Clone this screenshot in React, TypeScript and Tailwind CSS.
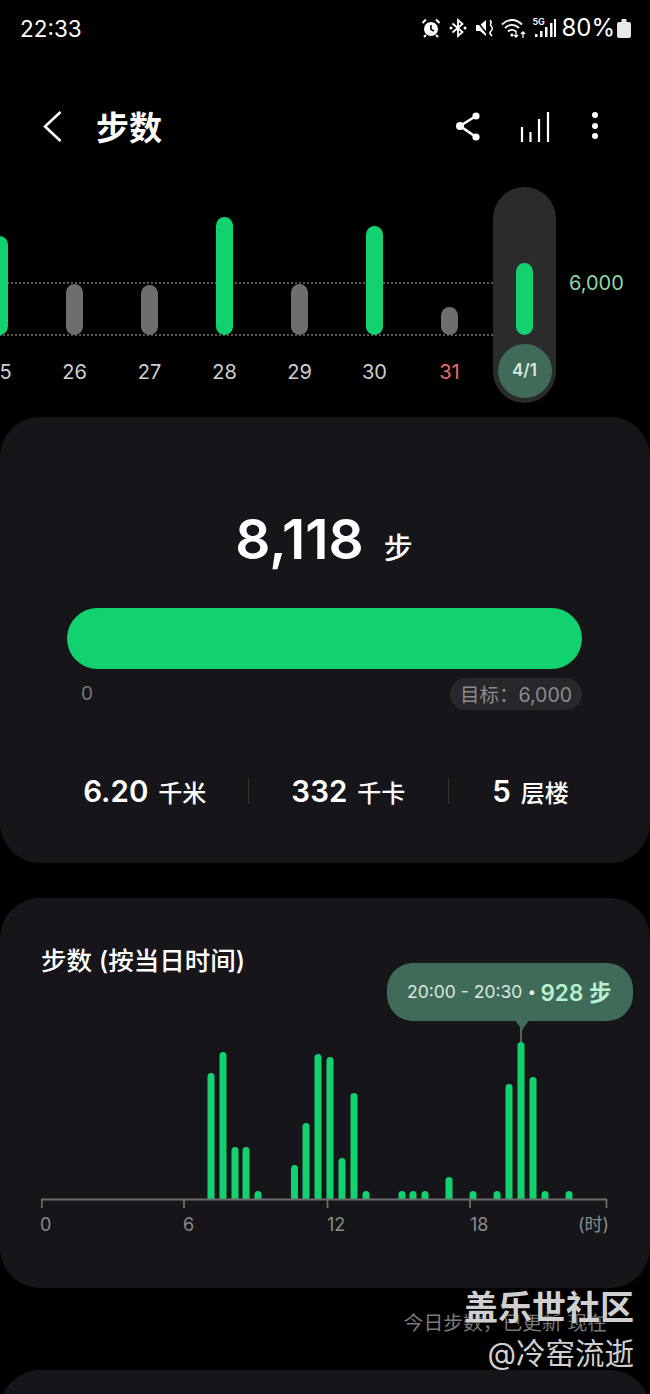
import React from 'react';

const font = { fontFamily: 'Inter, "Noto Sans CJK SC", sans-serif' };

// daily totals shown on the week strip; height is the bar height in px
const days = [
  { label: '25', height: 99, done: true },
  { label: '26', height: 51, done: false },
  { label: '27', height: 50, done: false },
  { label: '28', height: 118, done: true },
  { label: '29', height: 51, done: false },
  { label: '30', height: 109, done: true },
  { label: '31', height: 28, done: false, holiday: true },
];

// half-hour buckets: x centre and top of each bar in chart coordinates
const hourly: [number, number][] = [
  [170, 175], [182, 154], [194, 249], [205, 249], [217, 293],
  [253.5, 267], [265, 225], [277, 156], [289, 159], [301, 260], [313, 195], [325, 293],
  [361, 293], [372, 293], [384, 293], [408, 279], [432, 293], [456, 293],
  [468, 186], [480, 144], [492, 179], [504, 293], [528, 293],
];

const StatusIcons = () => (
  <div className="flex items-center text-white">
    {/* alarm */}
    <svg width="20" height="20" viewBox="0 0 20 20" className="mr-[8px]">
      <circle cx="10" cy="11" r="7" fill="#fff" />
      <path d="M10 7v4.5l3 1.5" stroke="#000" strokeWidth="1.6" fill="none" />
      <path d="M1.5 5 5 1.5M18.5 5 15 1.5M5 17l-2 2M15 17l2 2" stroke="#fff" strokeWidth="2" />
    </svg>
    {/* bluetooth with side dots */}
    <svg width="18" height="20" viewBox="0 0 18 20" className="mr-[8px]">
      <path d="M3.5 5.5 13.5 14 9 18V2l4.5 4L3.5 14.5" stroke="#fff" strokeWidth="1.8" fill="none" />
      <circle cx="2" cy="10" r="1.5" fill="#fff" />
      <circle cx="16" cy="10" r="1.5" fill="#fff" />
    </svg>
    {/* muted speaker */}
    <svg width="20" height="20" viewBox="0 0 20 20" className="mr-[6px]">
      <path d="M1 7h4l6-5v16l-6-5H1z" fill="#fff" />
      <path d="M1 2l12 15" stroke="#000" strokeWidth="1.5" />
      <path d="M15 2c3 3-1 4 1 6s2 3 0 5-1 3 1 5" stroke="#fff" strokeWidth="1.6" fill="none" />
    </svg>
    {/* wifi with up/down arrows */}
    <svg width="27" height="22" viewBox="0 0 27 22" className="mr-[4px]">
      <path d="M1 7.5c6-6 14-6 20 0M4 11c4.500-4 9.500-4 14 0M7 14.500c2.500-2 5.500-2 8 0" stroke="#fff" strokeWidth="1.8" fill="none" />
      <path d="M15 14v6m-2-2 2 2 2-2M22 21v-6m-2 2 2-2 2 2" stroke="#fff" strokeWidth="1.3" fill="none" />
      <circle cx="11" cy="18" r="1.600" fill="#fff" />
    </svg>
    {/* 5G and signal bars */}
    <div className="relative w-[24px] h-[22px] mr-[5px]">
      <span className="absolute left-0 top-[-1px] text-[9px] leading-[11px] font-semibold">5G</span>
      <svg width="24" height="22" viewBox="0 0 24 22" className="absolute inset-0">
        <path d="M3 17h2.500v3H3zM8 14h2.500v6H8zM13 10h2.500v10H13zM18 6h2.500v14H18zM22 2h2v18h-2z" fill="#fff" />
      </svg>
    </div>
    <span className="text-[24px] leading-none mr-[2px]">80%</span>
    {/* battery */}
    <svg width="14" height="19" viewBox="0 0 14 19">
      <path d="M4.500 0h5v3h-5z" fill="#e8e8e8" />
      <rect x="0" y="3" width="14" height="16" rx="2" fill="#e8e8e8" />
    </svg>
  </div>
);

const StatItem = ({ value, unit }: { value: string; unit: string }) => (
  <div className="flex items-baseline">
    <span className="text-[29.5px] font-semibold text-white">{value}</span>
    <span className="ml-[10px] text-[24px] font-medium text-white">{unit}</span>
  </div>
);

const App = () => {
  return (
    <div className="w-[650px] h-[1394px] overflow-hidden bg-black relative" style={font}>
      {/* status bar */}
      <div className="h-[56px] flex items-center justify-between pl-[20px] pr-[19px]">
        <span className="text-[22.5px] pt-[2px] text-white">22:33</span>
        <StatusIcons />
      </div>

      {/* header */}
      <div className="h-[131px] pt-[41px] pb-[30px] flex items-center pl-[43px] pr-[51px]">
        <svg width="19" height="32" viewBox="0 0 19 32" className="shrink-0">
          <path d="M17.500 1 2 15.500 17.500 30" stroke="#fff" strokeWidth="2.600" fill="none" />
        </svg>
        <h1 className="ml-[34px] pt-[3px] text-[33px] font-bold text-white flex-1">步数</h1>
        <svg width="28" height="30" viewBox="0 0 28 30" className="mr-[38px] -mt-[2px]">
          <path d="M22 5 6 15l16 11" stroke="#fff" strokeWidth="2.600" fill="none" />
          <circle cx="22" cy="5" r="3.600" fill="#fff" />
          <circle cx="6" cy="15" r="4" fill="#fff" />
          <circle cx="22" cy="26" r="3.600" fill="#fff" />
        </svg>
        <svg width="30" height="32" viewBox="0 0 30 32" className="mr-[41px]">
          <path d="M2 16v15M10.500 21v10M19 8v23M28 1v30" stroke="#fff" strokeWidth="2.200" />
        </svg>
        <svg width="8" height="30" viewBox="0 0 8 30" className="-mt-[2px]">
          <circle cx="4" cy="4" r="3" fill="#fff" />
          <circle cx="4" cy="15" r="3" fill="#fff" />
          <circle cx="4" cy="25" r="3" fill="#fff" />
        </svg>
      </div>

      {/* week strip */}
      <div className="relative h-[216px]">
        <div className="absolute left-0 top-[95px] w-[493px] border-t-2 border-dotted border-[#555]" />
        <div className="absolute left-0 top-[147px] w-[493px] border-t-2 border-dotted border-[#555]" />
        <div className="flex -ml-[38px]">
          {days.map((d) => (
            <div key={d.label} className="relative w-[75px] flex flex-col items-center">
              <div className="h-[148px] flex items-end">
                <div
                  className={`w-[17px] rounded-full ${d.done ? 'bg-[#12d26f]' : 'bg-[#6e6e6e]'}`}
                  style={{ height: d.height }}
                />
              </div>
              <span className={`mt-[25px] text-[20px] leading-[24px] ${d.holiday ? 'text-[#e86a6a]' : 'text-[#cfcfcf]'}`}>
                {d.label}
              </span>
            </div>
          ))}
          {/* today, highlighted */}
          <div className="relative w-[63px] h-[216px] ml-[6px] rounded-full bg-[#2a2b2d] flex flex-col items-center">
            <div className="h-[148px] flex items-end">
              <div className="w-[17px] h-[72px] rounded-full bg-[#12d26f]" />
            </div>
            <div className="mt-[9px] w-[54px] h-[54px] rounded-full bg-[#3f6b58] flex items-center justify-center text-[17px] font-semibold text-[#d8e8df]">
              4/1
            </div>
          </div>
        </div>
        <span className="absolute left-[569px] top-[84px] text-[20px] leading-[24px] text-[#8fd6a4]">6,000</span>
      </div>

      {/* today's summary */}
      <div className="mt-[14px] h-[446px] rounded-[40px] bg-[#16161a] pl-[67px] pr-[68px] pt-[84px]">
        <div className="h-[76px] flex items-baseline justify-center pr-[1px]">
          <span className="text-[55px] leading-[76px] font-semibold text-white">8,118</span>
          <span className="ml-[20px] text-[29px] font-medium text-white">步</span>
        </div>
        <div className="mt-[31px] h-[61px] rounded-full bg-[#12d26f]" />
        <div className="mt-[9px] flex items-start justify-between">
          <span className="ml-[14px] pt-[2px] text-[19px] leading-[28px] text-[#777]">0</span>
          <span className="h-[32px] px-[10px] rounded-full bg-[#27282b] text-[19.5px] leading-[34px] text-[#8c8c8c]">
            目标：6,000
          </span>
        </div>
        <div className="mt-[59px] -mx-[50px] flex items-center justify-center pl-[3px]">
          <StatItem value="6.20" unit="千米" />
          <div className="mx-[42px] w-px h-[26px] bg-[#333]" />
          <StatItem value="332" unit="千卡" />
          <div className="mx-[43px] w-px h-[26px] bg-[#333]" />
          <StatItem value="5" unit="层楼" />
        </div>
      </div>

      {/* steps by time of day */}
      <div className="relative mt-[35px] h-[390px] rounded-[40px] bg-[#16161a] pl-[41px] pt-[45px]">
        <h2 className="text-[25.5px] leading-[36px] font-medium text-white">步数 (按当日时间)</h2>

        <div className="absolute left-[387px] top-[65px] w-[246px] h-[58px] pl-[20px] pt-[1px] rounded-[26px] bg-[#3f6b58] flex items-center">
          <span className="text-[17.5px] text-[#d8e8df]">20:00 - 20:30</span>
          <span className="ml-[6px] mr-[5px] text-[15px] font-bold text-[#e6f0ea]">•</span>
          <span className="text-[22.5px] font-semibold text-[#b8f0d0]">928 步</span>
        </div>

        <svg width="580" height="320" viewBox="0 0 580 320" className="absolute left-[41px] top-0">
          {hourly.map(([x, top]) => (
            <path key={x} d={`M${x - 3.5} 301.500V${top + 3.500}a3.500 3.500 0 0 1 7 0V301.500z`} fill="#12d26f" />
          ))}
          <path d="M474.500 123h13l-6.500 9z" fill="#3f6b58" />
          <path d="M480 130v14" stroke="#5d8573" strokeWidth="1.500" />
          <path d="M0 301.500h566M.75 301v9M143 301v9M286.500 301v9M429 301v9M565.500 301v9" stroke="#6c6c6c" strokeWidth="1.800" fill="none" />
        </svg>

        <span className="absolute left-[40px] top-[317px] text-[18px] leading-[20px] text-[#8a8a8a]">0</span>
        <span className="absolute left-[183px] top-[317px] text-[18px] leading-[20px] text-[#8a8a8a]">6</span>
        <span className="absolute left-[327px] top-[317px] text-[18px] leading-[20px] text-[#8a8a8a]">12</span>
        <span className="absolute left-[470px] top-[317px] text-[18px] leading-[20px] text-[#8a8a8a]">18</span>
        <span className="absolute left-[578px] top-[317px] text-[18px] leading-[20px] text-[#8a8a8a]">(时)</span>
      </div>

      <div className="mt-[23px] pr-[43px] text-right text-[19.8px] leading-[24px] text-[#7a7a7a]">今日步数，已更新 现在</div>

      {/* next card, cut off by the screen edge */}
      <div className="mt-[35px] h-[80px] rounded-t-[40px] bg-[#16161a]" />

      {/* community watermark */}
      <div className="absolute right-[16px] top-[1286px] text-right text-[#cfcfcf]">
        <div className="text-[34px] leading-[44px] font-bold [text-shadow:0_0_2px_#000]">盖乐世社区</div>
        <div className="text-[29.5px] leading-[46px] [text-shadow:0_0_2px_#000]">@冷窑流逝</div>
      </div>
    </div>
  );
};

export default App;
